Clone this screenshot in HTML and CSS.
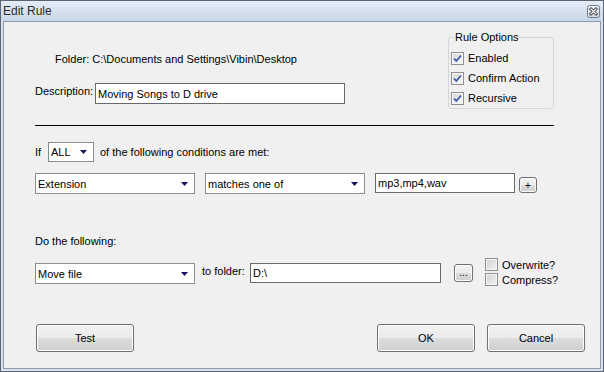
FILE: index.html
```html
<!DOCTYPE html>
<html lang="en">
<head>
    <meta charset="UTF-8">
    <title>Edit Rule</title>
    <link rel="stylesheet" href="styles.css">
</head>
<body>
    <div class="window">
        <!-- Title bar -->
        <div class="titlebar">
            <span class="title">Edit Rule</span>
            <span class="close-btn">
                <svg width="13" height="13" viewBox="0 0 13 13">
                    <defs>
                        <linearGradient id="cg" x1="0" y1="0" x2="0" y2="1">
                            <stop offset="0" stop-color="#f4f7fb"/>
                            <stop offset="1" stop-color="#cfd9e6"/>
                        </linearGradient>
                    </defs>
                    <rect x="0.5" y="0.5" width="12" height="12" rx="2" fill="url(#cg)" stroke="#6d7a8b"/>
                    <path d="M4 4 L9 9 M9 4 L4 9" stroke="#3b3b3b" stroke-width="3" stroke-linecap="square"/>
                    <path d="M4 4 L9 9 M9 4 L4 9" stroke="#ffffff" stroke-width="1.2" stroke-linecap="square"/>
                </svg>
            </span>
        </div>

        <div class="client">
            <!-- Folder, description, options -->
            <div class="top">
                <div class="info">
                    <div class="folder">Folder: C:\Documents and Settings\Vibin\Desktop</div>
                    <div class="desc-row">
                        <label class="desc-label" for="description">Description:</label>
                        <input class="textbox desc-box" type="text" id="description" value="Moving Songs to D drive">
                    </div>
                </div>
                <fieldset class="options">
                    <legend>Rule Options</legend>
                    <div class="check-row">
                        <span class="check"><svg width="11" height="11" viewBox="0 0 11 11"><path d="M2 5.5 L4.3 8 L9 2.5" fill="none" stroke="#3c56a0" stroke-width="1.8"/></svg></span>Enabled
                    </div>
                    <div class="check-row">
                        <span class="check"><svg width="11" height="11" viewBox="0 0 11 11"><path d="M2 5.5 L4.3 8 L9 2.5" fill="none" stroke="#3c56a0" stroke-width="1.8"/></svg></span>Confirm Action
                    </div>
                    <div class="check-row">
                        <span class="check"><svg width="11" height="11" viewBox="0 0 11 11"><path d="M2 5.5 L4.3 8 L9 2.5" fill="none" stroke="#3c56a0" stroke-width="1.8"/></svg></span>Recursive
                    </div>
                </fieldset>
            </div>

            <div class="rule-line"></div>

            <!-- Conditions -->
            <div class="if-row">
                <span class="if-word">If</span>
                <div class="combo combo-small">
                    <span>ALL</span>
                    <svg class="arrow" width="7" height="4" viewBox="0 0 7 4"><polygon points="0,0 7,0 3.5,4" fill="#14145e"/></svg>
                </div>
                <span class="if-text">of the following conditions are met:</span>
            </div>

            <div class="cond-row">
                <div class="combo combo-wide">
                    <span>Extension</span>
                    <svg class="arrow" width="7" height="4" viewBox="0 0 7 4"><polygon points="0,0 7,0 3.5,4" fill="#14145e"/></svg>
                </div>
                <div class="combo combo-wide combo-gap">
                    <span>matches one of</span>
                    <svg class="arrow" width="7" height="4" viewBox="0 0 7 4"><polygon points="0,0 7,0 3.5,4" fill="#14145e"/></svg>
                </div>
                <input class="textbox ext-box" type="text" value="mp3,mp4,wav">
                <button class="btn small-btn plus-btn">+</button>
            </div>

            <!-- Actions -->
            <div class="do-label">Do the following:</div>

            <div class="action-row">
                <div class="combo combo-wide action-combo">
                    <span>Move file</span>
                    <svg class="arrow" width="7" height="4" viewBox="0 0 7 4"><polygon points="0,0 7,0 3.5,4" fill="#14145e"/></svg>
                </div>
                <span class="folder-label">to folder:</span>
                <input class="textbox folder-box" type="text" value="D:\">
                <button class="btn small-btn browse-btn">...</button>
                <div class="extra-checks">
                    <div class="small-check-row"><span class="check empty"></span>Overwrite?</div>
                    <div class="small-check-row"><span class="check empty"></span>Compress?</div>
                </div>
            </div>

            <!-- Dialog buttons -->
            <div class="buttons">
                <button class="btn big-btn">Test</button>
                <div class="right-buttons">
                    <button class="btn big-btn">OK</button>
                    <button class="btn big-btn">Cancel</button>
                </div>
            </div>
        </div>
    </div>
</body>
</html>
```

FILE: styles.css
```css
body {
    margin: 0;
    font-family: "Liberation Sans", Arial, sans-serif;
    font-size: 11px;
    color: #000;
    background-color: #f0f0f0;
}

.window {
    width: 604px;
    height: 372px;
    box-sizing: border-box;
    border: 1px solid #5b6573;
    background-color: #d7e3f0;
    display: flex;
    flex-direction: column;
}

.titlebar {
    height: 20px;
    flex: none;
    display: flex;
    align-items: center;
    justify-content: space-between;
    padding: 0 3px 0 2px;
    background: linear-gradient(#e5edf7, #c8d7e9);
}

.title {
    font-size: 12px;
    color: #2b2b2b;
}

.close-btn {
    display: flex;
    width: 13px;
    height: 13px;
    margin-top: 1px;
}

.client {
    flex: 1;
    margin: 0 2px 2px;
    border: 1px solid #8e9aab;
    background-color: #f0f0f0;
    padding: 9px 15px 0 31px;
}

/* Top section */
.top {
    display: flex;
    justify-content: space-between;
    width: 519px;
}

.folder {
    margin-top: 22px;
    padding-left: 20px;
    line-height: 13px;
}

.desc-row {
    display: flex;
    margin-top: 17px;
}

.desc-label {
    width: 60px;
    margin-top: 2px;
    line-height: 13px;
}

.textbox {
    box-sizing: border-box;
    height: 21px;
    margin: 0;
    border: 1px solid #6a6a6a;
    background-color: #fff;
    padding: 0 2px;
    font-family: inherit;
    font-size: 11px;
    color: #000;
    outline: none;
}

.desc-box {
    width: 250px;
}

.options {
    width: 106px;
    box-sizing: border-box;
    margin: 0;
    padding: 4px 0 0 2px;
    border: 1px solid #d3d6da;
    border-radius: 3px;
}

.options legend {
    margin-left: 3px;
    padding: 0 1px;
    line-height: 13px;
}

.check-row {
    display: flex;
    align-items: center;
    height: 20px;
    gap: 4px;
}

.check {
    width: 13px;
    height: 13px;
    box-sizing: border-box;
    flex: none;
    border: 1px solid #8f8f8f;
    background: linear-gradient(135deg, #d8d8d8, #fbfbfb);
    box-shadow: inset 0 0 0 1px #f6f6f6;
    display: flex;
    align-items: center;
    justify-content: center;
}

.check.empty {
    background: linear-gradient(135deg, #cfcfcf, #f4f4f4);
}

.rule-line {
    width: 519px;
    height: 1px;
    margin-top: 16px;
    background-color: #000;
}

/* Conditions */
.if-row {
    display: flex;
    align-items: center;
    height: 20px;
    margin-top: 16px;
}

.if-word {
    width: 13px;
}

.combo {
    box-sizing: border-box;
    height: 21px;
    display: flex;
    align-items: center;
    justify-content: space-between;
    border: 1px solid #8b8e93;
    background-color: #fff;
    padding: 0 6px 0 2px;
}

.combo-small {
    width: 46px;
    height: 20px;
}

.combo-wide {
    width: 160px;
}

.combo-gap {
    margin-left: 10px;
}

.if-text {
    margin-left: 6px;
}

.cond-row {
    display: flex;
    align-items: flex-start;
    margin-top: 11px;
}

.ext-box {
    width: 140px;
    height: 20px;
    margin-left: 10px;
}

.btn {
    box-sizing: border-box;
    margin: 0;
    padding: 0;
    border: 1px solid #707070;
    border-radius: 3px;
    background: linear-gradient(#f3f3f3 0%, #ebebeb 50%, #dddddd 50%, #cfcfcf 100%);
    box-shadow: inset 0 0 0 1px #fbfbfb;
    font-family: inherit;
    font-size: 11px;
    color: #000;
}

.small-btn {
    font-size: 10px;
}

.plus-btn {
    width: 18px;
    height: 16px;
    margin: 4px 0 0 4px;
}

/* Actions */
.do-label {
    margin-top: 41px;
    line-height: 13px;
}

.action-row {
    display: flex;
    align-items: flex-start;
    margin-top: 9px;
}

.action-combo {
    margin-top: 6px;
}

.folder-label {
    width: 48px;
    margin: 8px 0 0 7px;
    line-height: 13px;
}

.folder-box {
    width: 191px;
    height: 20px;
    margin-top: 6px;
}

.browse-btn {
    width: 19px;
    height: 18px;
    margin: 7px 0 0 13px;
    line-height: 12px;
}

.extra-checks {
    margin-left: 12px;
}

.small-check-row {
    display: flex;
    align-items: center;
    height: 15px;
    gap: 4px;
}

/* Dialog buttons */
.buttons {
    display: flex;
    justify-content: space-between;
    margin-top: 37px;
    padding-left: 1px;
}

.right-buttons {
    display: flex;
    gap: 12px;
}

.big-btn {
    width: 98px;
    height: 28px;
}
```
